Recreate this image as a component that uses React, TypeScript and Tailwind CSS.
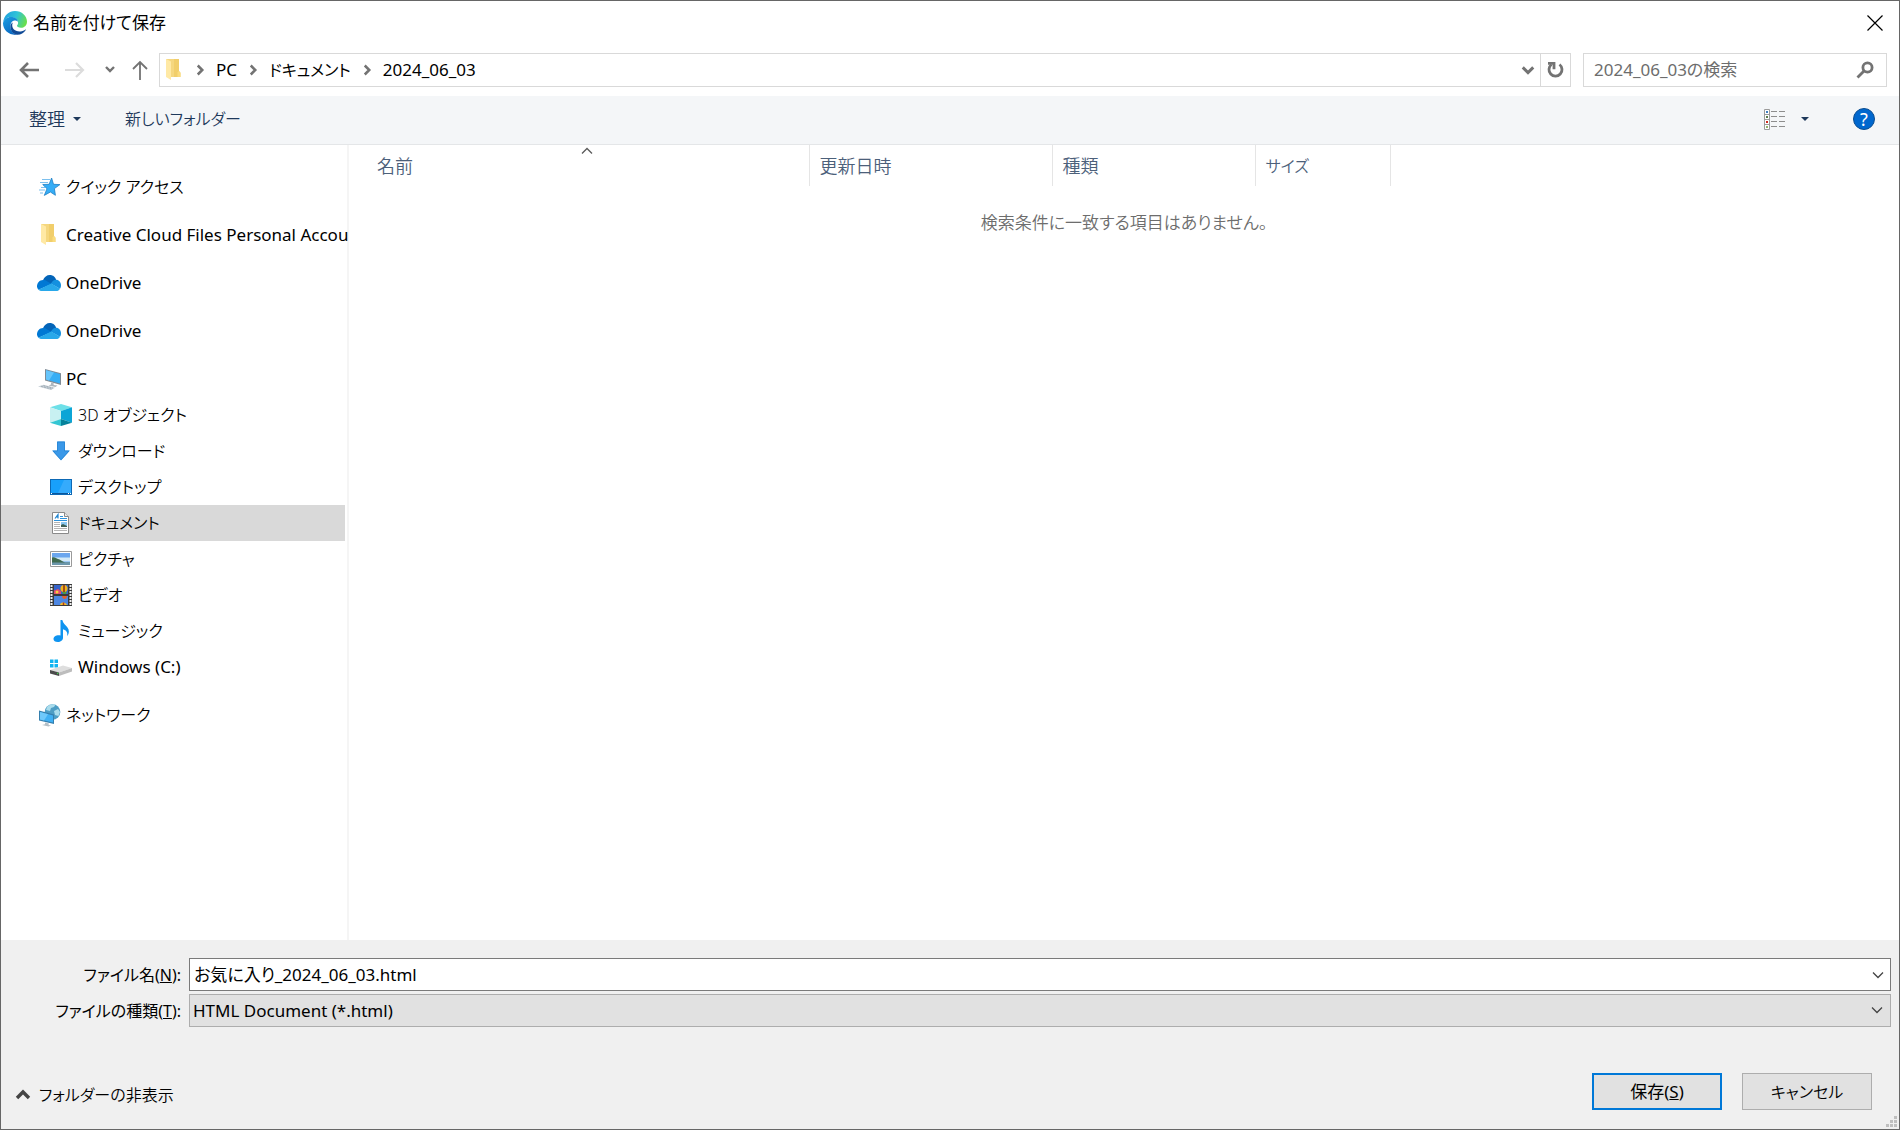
import { useState, type ReactNode } from "react"

type IconProps = { className?: string }

function EdgeLogo() {
  return (
    <svg viewBox="0 0 24 24" className="size-6 shrink-0" aria-hidden="true">
      <defs>
        <linearGradient id="edge-top" x1="0" y1="0.3" x2="1" y2="0.6">
          <stop offset="0" stopColor="#1fa0de" />
          <stop offset="0.5" stopColor="#2fc3d8" />
          <stop offset="1" stopColor="#6be046" />
        </linearGradient>
        <linearGradient id="edge-left" x1="0" y1="0" x2="0.6" y2="1">
          <stop offset="0" stopColor="#1c9fe2" />
          <stop offset="1" stopColor="#0a68c2" />
        </linearGradient>
      </defs>
      <path d="M0.2 11C1 4.400 6 0 12 0c6.800 0 12 5 12 10.400 0 4-2.800 6.300-6 6.300-2.600 0-4-.9-4-1.900 0-.8 1.100-1.200 1.100-3.100C15.100 8.300 11.500 6 8 6 4.500 6 1.500 8 .2 11Z" fill="url(#edge-top)" />
      <path d="M0 12.300C.4 8.500 4 6 8 6c3.700 0 6.600 2 7 4.600-1.100-1-2.400-1.300-3.600-1.200-2.300.2-4.200 2.700-4 6 .2 4 3 7.700 6.600 8.400C6 24.600 0 19 0 12.300Z" fill="url(#edge-left)" />
      <path d="M9.800 11.500c-2.200 5.200 2 9.400 7.600 9 2.100-.2 3.900-1.100 5-2 .4-.3.700 0 .4.500-2 3.200-5.300 5-8.800 4.800-4-.6-6.600-4.600-6.600-8.400 0-1.700.9-3.100 2.400-3.900Z" fill="#104a96" />
    </svg>
  )
}

function FolderIcon({ className = "w-6" }: IconProps) {
  return (
    <svg viewBox="0 0 24 24" className={`${className} h-6 shrink-0`} aria-hidden="true">
      <path d="M4 1h13v12l1.500 1.500V19H4Z" fill="#f5d77f" />
      <path d="M12 1h5v12l-1 1.500V19h-4Z" fill="#f1ce6b" />
      <path d="M4 1l5 2.500V22l-5-3Z" fill="#ffe9a5" />
      <path d="M15.500 14.500 17 13l1.500 2V19h-3Z" fill="#fadb7d" />
    </svg>
  )
}

function QuickAccessIcon() {
  return (
    <svg viewBox="0 0 24 24" className="size-6 shrink-0" aria-hidden="true">
      <path d="M5 4.500h8M3 7.500h8M2 15h6M4 12.500h4M3 18h3" stroke="#7cc0ee" strokeWidth="1.200" />
      <path d="m14.600 3 1.900 6.300 6.400.3-5.500 4 1 6.700-5-3.300-6.100 3.400 2.700-6.700-4.300-4.200 6.400-.2Z" fill="#35adf6" stroke="#1e7fc4" strokeWidth=".8" />
    </svg>
  )
}

function OneDriveIcon() {
  return (
    <svg viewBox="0 0 24 24" className="size-6 shrink-0" aria-hidden="true">
      <path d="M6 9.200C7.300 6 9.700 4 12.800 4c3.400 0 5.700 2.200 6.300 5l-5.400 4.500Z" fill="#0364b8" />
      <path d="M0 15.300C0 12 2.500 9 6 9c1.600 0 2.600.4 3.500.9l5.300 3.200L1.500 18.700C.5 17.800 0 16.600 0 15.300Z" fill="#0078d4" />
      <path d="M14 12.700c1.200-2.300 2.700-3.900 5-3.900 3 0 5 2.700 5 5.600 0 1.300-.3 2.300-1 3.300Z" fill="#1490df" />
      <path d="M1.400 18.700 14.300 12.500 23 17.700c-.8 1.400-2.100 2.300-3.700 2.300H5c-1.400 0-2.600-.4-3.600-1.300Z" fill="#28a8ea" />
    </svg>
  )
}

function PcIcon() {
  return (
    <svg viewBox="0 0 24 24" className="size-6 shrink-0" aria-hidden="true">
      <path d="m8 2 16 4.300V18L8 13.500Z" fill="#7e8b96" />
      <path d="m9 3.300 14 3.800v9.300L9 12.600Z" fill="#38aef5" />
      <path d="m9 3.300 8 2.200-5 8L9 12.600Z" fill="#66c5fb" />
      <path d="m14 15.500 3 .9-.5 1.600 4 .5-2 1.500-7-1.500 2.500-1Z" fill="#aeb7be" />
      <path d="m1 19.500 5.500-1.700L18 20.800 14 23Z" fill="#c7d0d7" />
      <path d="m4 19.300 10.500 2.700M6.500 18.600l9.500 2.500" stroke="#98a5ae" strokeWidth=".8" strokeDasharray="2 1" />
    </svg>
  )
}

function ObjectsIcon() {
  return (
    <svg viewBox="0 0 22 22" className="size-[22px] shrink-0" aria-hidden="true">
      <path d="M0 3.300 11 0l11 3.300L11 7Z" fill="#6ee0e8" />
      <path d="M0 3.300 11 7v8L0 18.700Z" fill="#c8f1f2" />
      <path d="M22 3.300 11 7v8l11 3.700Z" fill="#0ca5d6" />
      <path d="M0 18.700 11 15v7Z" fill="#34c6d3" />
      <path d="M22 18.700 11 15v7Z" fill="#06829b" />
    </svg>
  )
}

function DownloadIcon() {
  return (
    <svg viewBox="0 0 22 22" className="size-[22px] shrink-0" aria-hidden="true">
      <path d="M7 1.500h8v9h5L11 20.500 2 10.500h5Z" fill="#3a98e8" />
      <path d="M7.500 2h7v9h4.400L11 19.800 3.100 11h4.400Z" fill="none" stroke="#2786d4" strokeWidth=".8" />
    </svg>
  )
}

function DesktopIcon() {
  return (
    <svg viewBox="0 0 22 22" className="size-[22px] shrink-0" aria-hidden="true">
      <path d="M0 3h22v16H0Z" fill="#0d69b5" />
      <path d="M1 4h20v13H1Z" fill="#18a0fb" />
      <path d="M14 4h7v13H8Z" fill="#35abfc" />
      <path d="M1 17.500h20" stroke="#0a569a" />
      <path d="M1 17.500h1M18 17.500h1M20 17.500h1" stroke="#fff" />
    </svg>
  )
}

function DocumentIcon() {
  return (
    <svg viewBox="0 0 22 22" className="size-[22px] shrink-0" aria-hidden="true">
      <path d="M2.500.5h12l4 4v17h-16Z" fill="#fff" stroke="#8a8a8a" />
      <path d="M14.500.5v4h4" fill="#e8e8e8" stroke="#8a8a8a" />
      <path d="m5 6.500 3-4v4M6 5h2" fill="none" stroke="#1d84d0" strokeWidth="1.200" />
      <path d="M10 4.500h3M10 6.500h7M4 8.500h13" stroke="#2b92dc" />
      <path d="M4 10.500h6M4 12.500h6M4 14.500h6M4 16.500h13M4 18.500h13" stroke="#b4b4b4" />
      <path d="M11 10h6v5h-6Z" fill="#8cc7f0" />
      <path d="m11 13 2-1 4 2v1h-6Z" fill="#3d5f55" />
    </svg>
  )
}

function PictureIcon() {
  return (
    <svg viewBox="0 0 22 22" className="size-[22px] shrink-0" aria-hidden="true">
      <path d="M.5 3.500h21v15H.5Z" fill="#fff" stroke="#9a9a9a" />
      <path d="M2 5h18v12H2Z" fill="#9cc9f4" />
      <path d="M2 5h18v4H2Z" fill="#6ba6ee" />
      <path d="M2 10h18v3H2Z" fill="#d3e9f7" />
      <path d="M2 14h18v3H2Z" fill="#6c97ab" />
      <path d="M2 9.500c3-1 4 1 6 1.500s4 2.500 7 3.500H2Z" fill="#3f6b50" />
    </svg>
  )
}

function VideoIcon() {
  return (
    <svg viewBox="0 0 22 22" className="size-[22px] shrink-0" aria-hidden="true">
      <path d="M0 0h22v22H0Z" fill="#3a3a3a" />
      <path d="M1.500 1v21M20.500 1v21" stroke="#f2f2f2" strokeWidth="2" strokeDasharray="2 1" />
      <path d="M4 1h14v9H4Z" fill="#3563c9" />
      <path d="M4 12h14v9H4Z" fill="#4c86e2" />
      <path d="M4 6.500 8 5l3 2v3H4Z" fill="#e34b6f" />
      <circle cx="14" cy="4.500" r="3.500" fill="#f0b41c" />
      <path d="M14 1v7" stroke="#8a2d16" strokeWidth="1.500" />
      <circle cx="7" cy="8" r="1.500" fill="#f7d23c" />
      <path d="M12 8h5l-1.500 2h-2Z" fill="#4c9d3b" />
      <path d="M12 12h5c0 2-1.500 3-2.500 3S12 14 12 12Z" fill="#e5612c" />
      <path d="M10 21c0-3.500 6-3.500 7 0Z" fill="#f3be28" />
      <path d="M13.500 18.500V21" stroke="#b0341f" strokeWidth="1.500" />
    </svg>
  )
}

function MusicIcon() {
  return (
    <svg viewBox="0 0 22 22" className="size-[22px] shrink-0" aria-hidden="true">
      <path d="M10.500 0h1.800c.8 3.600 3 4.700 5 7.200 2.100 2.700 2.200 6-.2 9 .9-4-.8-6-4.100-7v8.500c0 2.600-2.400 4.300-5.200 4.300C5.200 22 3.500 20.800 3.500 19c0-2.300 2.500-3.800 5-3.800.8 0 1.400.1 2 .3Z" fill="#0f94f0" />
    </svg>
  )
}

function DriveIcon() {
  return (
    <svg viewBox="0 0 22 22" className="size-[22px] shrink-0" aria-hidden="true">
      <path d="M0 3.500h3.500V7H0ZM4.500 3.500H8V7H4.500ZM0 8h3.500v3.500H0ZM4.500 8H8v3.500H4.500Z" fill="#10b4f1" />
      <path d="m0 14 13-4.500 9 2.500-13 4.500Z" fill="#dedede" />
      <path d="m0 14 9 2.500V20l-9-2.500Z" fill="#4b4b4b" />
      <path d="m9 16.500 13-4.500v3.500L9 20Z" fill="#bdbdbd" />
      <path d="M7 17.400h1.300" stroke="#3fd34a" strokeWidth="1.200" />
    </svg>
  )
}

function NetworkIcon() {
  return (
    <svg viewBox="0 0 24 24" className="size-6 shrink-0" aria-hidden="true">
      <circle cx="15.500" cy="9" r="7.800" fill="#4d9dc4" />
      <path d="M10 4c2-2.500 6-3.300 8.500-2.200L17 4l-3 1-1 3-4-1ZM17 8l4-2 2 3-1.500 4-3.500-1Z" fill="#a9dcec" />
      <path d="m2 7.500 15 4V21L2 17.500Z" fill="#347fae" />
      <path d="m3 9 13 3.500v7L3 16.500Z" fill="#3fb0f4" />
      <path d="m3 9 8 2.200-4 6.300-4-1Z" fill="#6fc9fb" />
      <path d="m8 19.500 4 1-.5 1.500 2.500.5-2.500 1L5 22l3-.8Z" fill="#b5bfc6" />
    </svg>
  )
}

// Heavy chevron of the address bar; rotate it for other directions.
function Chevron({ className = "" }: IconProps) {
  return (
    <svg viewBox="0 0 16 16" className={`shrink-0 ${className}`} fill="none" stroke="currentColor" strokeWidth="3.400" aria-hidden="true">
      <path d="m2 5 6 6 6-6" />
    </svg>
  )
}

function ThinChevron({ className = "" }: IconProps) {
  return (
    <svg viewBox="0 0 12 12" className={`size-3 shrink-0 ${className}`} fill="none" stroke="currentColor" strokeWidth="1.300" aria-hidden="true">
      <path d="m1 3.500 5 5 5-5" />
    </svg>
  )
}

function Caret() {
  return (
    <svg viewBox="0 0 8 4" className="h-1 w-2 shrink-0" fill="currentColor" aria-hidden="true">
      <path d="M0 0h8L4 4Z" />
    </svg>
  )
}

type TreeItem = { id: string; label: string; icon: ReactNode; group?: boolean; latin?: boolean }

const treeItems: TreeItem[] = [
  { id: "quick", label: "クイック アクセス", icon: <QuickAccessIcon />, group: true },
  { id: "cc", label: "Creative Cloud Files Personal Accou", icon: <FolderIcon />, group: true, latin: true },
  { id: "od1", label: "OneDrive", icon: <OneDriveIcon />, group: true, latin: true },
  { id: "od2", label: "OneDrive", icon: <OneDriveIcon />, group: true, latin: true },
  { id: "pc", label: "PC", icon: <PcIcon />, group: true, latin: true },
  { id: "3d", label: "3D オブジェクト", icon: <ObjectsIcon /> },
  { id: "downloads", label: "ダウンロード", icon: <DownloadIcon /> },
  { id: "desktop", label: "デスクトップ", icon: <DesktopIcon /> },
  { id: "documents", label: "ドキュメント", icon: <DocumentIcon /> },
  { id: "pictures", label: "ピクチャ", icon: <PictureIcon /> },
  { id: "videos", label: "ビデオ", icon: <VideoIcon /> },
  { id: "music", label: "ミュージック", icon: <MusicIcon /> },
  { id: "c", label: "Windows (C:)", icon: <DriveIcon />, latin: true },
  { id: "network", label: "ネットワーク", icon: <NetworkIcon />, group: true },
]

function TitleBar() {
  return (
    <header className="flex h-11 items-center justify-between pl-0.5 pr-4">
      <h1 className="flex items-center gap-1.5 text-[17px]">
        <EdgeLogo />
        名前を付けて保存
      </h1>
      <button type="button" aria-label="閉じる">
        <svg viewBox="0 0 16 16" className="size-4" stroke="#000" strokeWidth="1.200" aria-hidden="true">
          <path d="m.5.5 15 15M15.500.5l-15 15" />
        </svg>
      </button>
    </header>
  )
}

function AddressBar() {
  return (
    <div className="flex items-center pb-[9px] pl-2.5 pr-3 pt-2 text-[#737373]">
      <div className="flex w-[148px] shrink-0 items-center pl-2">
        <button type="button" aria-label="戻る">
          <svg viewBox="0 0 20 20" className="size-5" fill="none" stroke="currentColor" strokeWidth="2.600" aria-hidden="true">
            <path d="M20 10H2M9 3l-7 7 7 7" />
          </svg>
        </button>
        <button type="button" aria-label="進む" className="ml-6.5 text-[#dcdcdc]">
          <svg viewBox="0 0 20 20" className="size-5" fill="none" stroke="currentColor" strokeWidth="2.200" aria-hidden="true">
            <path d="M0 10h18M11 3l7 7-7 7" />
          </svg>
        </button>
        <button type="button" aria-label="最近表示した場所" className="ml-5">
          <svg viewBox="0 0 10 10" className="size-2.5" fill="none" stroke="currentColor" strokeWidth="2.400" aria-hidden="true">
            <path d="m1 2 4 4 4-4" />
          </svg>
        </button>
        <button type="button" aria-label="上へ" className="ml-4">
          <svg viewBox="0 0 20 20" className="size-5" fill="none" stroke="currentColor" strokeWidth="1.800" aria-hidden="true">
            <path d="M9 20V2M2 9l7-7 7 7" />
          </svg>
        </button>
      </div>

      <div className="flex h-[34px] min-w-0 flex-1 border border-[#d9d9d9]">
        <nav aria-label="アドレス" className="flex min-w-0 flex-1 items-center text-black">
          <FolderIcon className="mx-0.5 w-6" />
          <ol className="flex items-center">
            {[
              { name: "PC", className: "text-[17px]" },
              { name: "ドキュメント", className: "text-base" },
              { name: "2024_06_03", className: "text-[17px]" },
            ].map((crumb) => (
              <li key={crumb.name} className="flex items-center">
                <Chevron className="mx-1.5 size-3 -rotate-90 text-[#737373]" />
                <a href="#" className={`px-1 ${crumb.className}`}>{crumb.name}</a>
              </li>
            ))}
          </ol>
        </nav>
        <button type="button" aria-label="以前の場所" className="flex w-6 items-center justify-center">
          <Chevron className="size-3.5" />
        </button>
        <button type="button" aria-label="最新の情報に更新" className="flex w-[30px] items-center justify-center border-l border-[#d9d9d9]">
          <svg viewBox="0 0 18 18" className="size-[18px]" fill="none" stroke="currentColor" strokeWidth="2.800" aria-hidden="true">
            <path d="M12.500 3.500a6.500 6.500 0 1 1-8 0" />
            <path d="M1 2.300h6v6" />
          </svg>
        </button>
      </div>

      <div className="ml-3 flex h-[34px] w-[304px] shrink-0 items-center border border-[#d9d9d9] pr-3">
        <input
          type="search"
          aria-label="2024_06_03の検索"
          placeholder="2024_06_03の検索"
          className="min-w-0 flex-1 bg-transparent px-2.5 text-[17px] text-black outline-none placeholder:text-[#6d6d6d]"
        />
        <svg viewBox="0 0 18 18" className="size-[18px] shrink-0" fill="none" stroke="currentColor" strokeWidth="2.800" aria-hidden="true">
          <circle cx="11.500" cy="6.500" r="4.600" />
          <path d="M8 10 1.500 16.500" />
        </svg>
      </div>
    </div>
  )
}

function Toolbar() {
  return (
    <div className="flex h-[49px] items-center justify-between border-b border-[#e4e6e8] bg-[#f4f6f8] pb-0.5 pl-7 pr-6 text-[#1e395b]">
      <div className="flex items-center gap-11">
        <button type="button" className="flex items-center gap-2 text-lg font-[350]">
          整理
          <Caret />
        </button>
        <button type="button" className="text-base font-[350]">新しいフォルダー</button>
      </div>
      <div className="flex items-center">
        <button type="button" aria-label="表示方法の変更">
          <svg viewBox="0 0 21 21" className="size-[21px]" fill="none" aria-hidden="true">
            <path d="M.5.5h5v20h-5ZM.5 5.500h5M.5 10.500h5M.5 15.500h5" fill="#fff" stroke="#9b9b9b" />
            <path d="M7 2.500h6M15 2.500h6M7 7.500h6M15 7.500h6M7 12.500h6M15 12.500h6M7 17.500h6M15 17.500h6" stroke="#8d8d8d" />
            <path d="M2 2h2v2H2Z" fill="#3f7fc0" />
            <path d="M2 7h2v2H2Z" fill="#5b7d4a" />
            <path d="M2 12h2v2H2Z" fill="#cf2a1c" />
            <path d="M2 17h2v2H2Z" fill="#8fb36b" />
          </svg>
        </button>
        <button type="button" aria-label="その他のオプション" className="ml-4 flex h-6 items-center">
          <Caret />
        </button>
        <button
          type="button"
          aria-label="ヘルプ"
          className="ml-11 flex size-[22px] items-center justify-center rounded-full border border-[#0b4d90] bg-[#0067ce] text-lg leading-none text-white"
        >
          ?
        </button>
      </div>
    </div>
  )
}

function FolderTree() {
  const [selected, setSelected] = useState("documents")

  return (
    <nav aria-label="フォルダー" className="w-[348px] shrink-0 border-r-2 border-[#f5f5f5] pr-0.5 pt-3">
      <ul>
        {treeItems.map((item) => (
          <li key={item.id} className={item.group ? "pt-3" : ""}>
            <button
              type="button"
              onClick={() => setSelected(item.id)}
              className={`flex h-9 w-full items-center whitespace-nowrap text-left ${
                item.latin ? "text-[17px]" : "text-base font-[350]"
              } ${item.group ? "gap-[5px] pl-9" : "gap-1.5 pl-[49px]"} ${
                selected === item.id ? "bg-[#d9d9d9]" : ""
              }`}
            >
              {item.icon}
              {item.label}
            </button>
          </li>
        ))}
      </ul>
    </nav>
  )
}

function FileList() {
  return (
    <main className="min-w-0 flex-1 pl-4">
      <table className="w-full table-fixed">
        <thead>
          <tr className="h-[41px] text-left text-lg text-[#4c607a]">
            <th scope="col" aria-sort="ascending" className="relative w-[444px] border-r border-[#e5e5e5] pl-3 font-[350]">
              名前
              <ThinChevron className="absolute left-1/2 top-0 -translate-x-1/2 rotate-180 text-[#5a5a5a]" />
            </th>
            <th scope="col" className="w-[243px] border-r border-[#e5e5e5] pl-2.5 font-[350]">更新日時</th>
            <th scope="col" className="w-[203px] border-r border-[#e5e5e5] pl-2.5 font-[350]">種類</th>
            <th scope="col" className="w-[135px] border-r border-[#e5e5e5] pl-2.5 text-base font-[350]">サイズ</th>
            <td />
          </tr>
        </thead>
        <tbody>
          <tr>
            <td colSpan={5} className="pr-4 pt-6 text-center text-[17px] font-[350] text-[#6d6d6d]">
              検索条件に一致する項目はありません。
            </td>
          </tr>
        </tbody>
      </table>
    </main>
  )
}

function SaveForm() {
  const [fileName, setFileName] = useState("お気に入り_2024_06_03.html")

  return (
    <form className="bg-[#f0f0f0] pt-[18px] text-base" onSubmit={(e) => e.preventDefault()}>
      <div className="grid grid-cols-[180px_1fr] items-center gap-x-2 gap-y-[3px] pr-2">
        <label htmlFor="file-name" className="text-right">
          ファイル名(<u>N</u>):
        </label>
        <div className="flex h-[33px] border border-[#7a7a7a] bg-white">
          <input
            id="file-name"
            value={fileName}
            onChange={(e) => setFileName(e.target.value)}
            className="min-w-0 flex-1 px-1 text-[17px] outline-none"
          />
          <button type="button" aria-label="履歴" className="flex w-6 items-center justify-center text-[#444]">
            <ThinChevron />
          </button>
        </div>
        <label htmlFor="file-type" className="text-right">
          ファイルの種類(<u>T</u>):
        </label>
        <div className="relative h-[33px]">
          <select id="file-type" className="size-full appearance-none border border-[#adadad] bg-[#e1e1e1] px-[3px] text-[17px] outline-none">
            <option>HTML Document (*.html)</option>
          </select>
          <ThinChevron className="pointer-events-none absolute right-2 top-2.5 text-[#444]" />
        </div>
      </div>

      <div className="flex items-start justify-between pb-3 pl-3.5 pr-[27px] pt-[46px]">
        <button type="button" className="flex h-11 items-center gap-2 font-[350]">
          <Chevron className="size-4 rotate-180 text-[#444]" />
          フォルダーの非表示
        </button>
        <div className="flex gap-5">
          <button type="submit" className="h-[37px] w-[130px] border-2 border-[#0078d7] bg-[#e1e1e1] text-[17px]">
            保存(<u>S</u>)
          </button>
          <button type="button" className="h-[37px] w-[130px] border border-[#adadad] bg-[#e1e1e1] font-[350]">
            キャンセル
          </button>
        </div>
      </div>
    </form>
  )
}

export default function App() {
  return (
    <div
      lang="ja"
      className="relative flex min-h-screen flex-col border border-[#666] bg-white font-['Noto_Sans','Noto_Sans_CJK_JP',sans-serif] text-black [font-feature-settings:'palt']"
    >
      <TitleBar />
      <AddressBar />
      <Toolbar />
      <div className="flex flex-1">
        <FolderTree />
        <FileList />
      </div>
      <SaveForm />
      {/* resize grip */}
      <svg viewBox="0 0 11 11" className="absolute bottom-0.5 right-0.5 size-[11px]" fill="#bfbfbf" aria-hidden="true">
        <path d="M8 0h3v3H8ZM4 4h3v3H4ZM8 4h3v3H8ZM0 8h3v3H0ZM4 8h3v3H4ZM8 8h3v3H8Z" />
      </svg>
    </div>
  )
}
